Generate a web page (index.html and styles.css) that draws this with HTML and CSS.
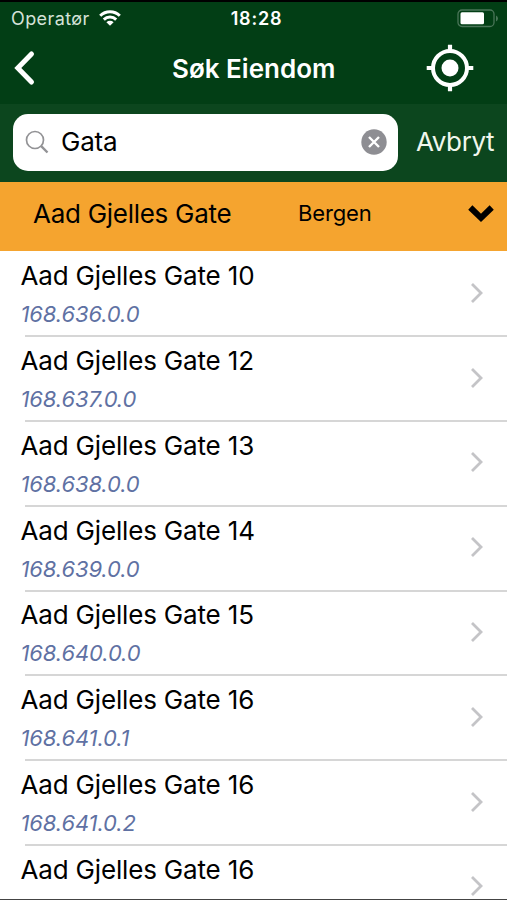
FILE: index.html
```html
<!DOCTYPE html>
<html lang="no">

<head>
  <meta charset="utf-8">
  <title>Søk Eiendom</title>
  <link rel="stylesheet" href="styles.css">
</head>

<body>
  <div id="app">
    <header>
      <div class="status">
        <div class="carrier">
          <span class="operator">Operatør</span>
          <svg width="22" height="16" viewBox="0 0 22 16" fill="none" stroke="#fff" stroke-width="3">
            <path d="M1.2 5.8a14 14 0 0 1 19.6 0" />
            <path d="M4.8 9.6a8.9 8.9 0 0 1 12.4 0" />
            <path d="M11 15.8L7.4 12.3a5.2 5.2 0 0 1 7.2 0z" fill="#fff" stroke="none" />
          </svg>
        </div>
        <span class="clock">18:28</span>
        <svg class="battery" width="42" height="19" viewBox="0 0 42 19">
          <rect x="1" y="1" width="36" height="16.5" rx="4" fill="none" stroke="#4a7558" stroke-width="1.3" />
          <rect x="3.5" y="3.3" width="23.5" height="12" rx="1.5" fill="#fff" />
          <path d="M39 6.5q2 1 2 3t-2 3z" fill="#4a7558" />
        </svg>
      </div>
      <div class="navbar">
        <svg class="back" width="22" height="36" viewBox="0 0 22 36" fill="none" stroke="#fff" stroke-width="5" stroke-linecap="round">
          <path d="M17.5 4L3.8 18L17.5 32" />
        </svg>
        <h1>Søk Eiendom</h1>
        <svg class="locate" width="48" height="48" viewBox="0 0 48 48">
          <circle cx="24" cy="24" r="17" fill="none" stroke="#fff" stroke-width="4" />
          <circle cx="24" cy="24" r="8.5" fill="#fff" />
          <path d="M24 .7v6M24 41.3v6M.7 24h6M41.3 24h6" stroke="#fff" stroke-width="4.2" />
        </svg>
      </div>
    </header>

    <div class="search">
      <div class="field">
        <svg width="24" height="24" viewBox="0 0 24 24" fill="none" stroke="#929295">
          <circle cx="10" cy="10" r="8.5" stroke-width="1.7" />
          <path d="M16.2 16.2L22.5 22.5" stroke-width="2.4" />
        </svg>
        <span class="query">Gata</span>
        <svg width="26" height="26" viewBox="0 0 26 26">
          <circle cx="13" cy="13" r="12.7" fill="#8e8e93" />
          <path d="M8 8l10 10M18 8L8 18" stroke="#fff" stroke-width="2.4" />
        </svg>
      </div>
      <span class="cancel">Avbryt</span>
    </div>

    <div class="section">
      <span class="street">Aad Gjelles Gate</span>
      <span class="city">Bergen</span>
      <svg width="26" height="18" viewBox="0 0 26 18" fill="none" stroke="#000" stroke-width="6">
        <path d="M2.3 3.5L13 13.8L23.7 3.5" />
      </svg>
    </div>

    <ul class="list"></ul>
  </div>

  <script>
    var results = [
      ['Aad Gjelles Gate 10', '168.636.0.0'],
      ['Aad Gjelles Gate 12', '168.637.0.0'],
      ['Aad Gjelles Gate 13', '168.638.0.0'],
      ['Aad Gjelles Gate 14', '168.639.0.0'],
      ['Aad Gjelles Gate 15', '168.640.0.0'],
      ['Aad Gjelles Gate 16', '168.641.0.1'],
      ['Aad Gjelles Gate 16', '168.641.0.2'],
      ['Aad Gjelles Gate 16', '']
    ]

    var list = document.querySelector('.list')
    results.forEach(function (item) {
      var row = document.createElement('li')
      row.innerHTML =
        '<div class="text"><div class="address">' + item[0] + '</div>' +
        '<div class="number">' + item[1] + '</div></div>' +
        '<svg width="14" height="22" viewBox="0 0 14 22" fill="none" stroke="#c4c4c7" stroke-width="2.8">' +
        '<path d="M2 2l9 9l-9 9" /></svg>'
      list.appendChild(row)
    })
  </script>
</body>

</html>
```
FILE: styles.css
```css
html,
body {
  margin: 0;
  padding: 0;
  height: 100%;
  overflow: hidden;
  background: #fff;
}

body {
  font-family: Inter, 'Liberation Sans', sans-serif;
  color: #000;
}

svg {
  display: block;
  flex: none;
}

#app {
  box-sizing: border-box;
  width: 507px;
  height: 900px;
  border-top: 2px solid #000;
  border-bottom: 1px solid #444;
  overflow: hidden;
}

header {
  background: #023e15;
  color: #fff;
  height: 102px;
}

.status {
  display: grid;
  grid-template-columns: 1fr auto 1fr;
  align-items: center;
  height: 32px;
  padding: 0 8px 0 11px;
}

.carrier {
  display: flex;
  align-items: center;
  gap: 9px;
}

.operator {
  font-size: 18px;
  letter-spacing: 0.4px;
  color: #d5e2d8;
}

.clock {
  font-size: 18px;
  font-weight: 600;
  letter-spacing: 0.8px;
  padding-left: 3px;
}

.battery {
  justify-self: end;
}

.navbar {
  display: grid;
  grid-template-columns: 140px 1fr 140px;
  align-items: center;
  height: 68px;
  padding: 0 33px 0 14px;
}

.navbar h1 {
  margin: 0;
  padding-left: 18px;
  font-size: 26px;
  font-weight: 600;
  white-space: nowrap;
}

.locate {
  justify-self: end;
  margin-right: 1px;
}

.search {
  display: flex;
  align-items: center;
  box-sizing: border-box;
  height: 78px;
  padding: 0 13px 2px;
  background: #0c461e;
}

.field {
  display: flex;
  flex: none;
  align-items: center;
  box-sizing: border-box;
  width: 385px;
  height: 57px;
  padding: 0 11px 0 12px;
  border-radius: 15px;
  background: #fff;
}

.query {
  flex: 1;
  padding: 0 0 2px 12px;
  font-size: 26px;
  letter-spacing: -0.2px;
}

.cancel {
  margin-left: 18px;
  padding-bottom: 2px;
  font-size: 26px;
  letter-spacing: -0.4px;
  color: #f1f7ed;
}

.section {
  display: flex;
  align-items: center;
  box-sizing: border-box;
  height: 69px;
  padding: 0 13px 7px 33px;
  background: #f5a42f;
}

.street {
  width: 265px;
  font-size: 26px;
  letter-spacing: -0.28px;
}

.city {
  flex: 1;
  padding-bottom: 1px;
  font-size: 22px;
  letter-spacing: -0.15px;
}

.list {
  margin: -0.5px 0 0;
  padding: 0;
  list-style: none;
}

.list li {
  display: flex;
  align-items: center;
  box-sizing: border-box;
  height: 84.8px;
  padding: 0 23px 0 20.5px;
}

.list li + li {
  background: linear-gradient(#d6d6d6, #d6d6d6) 25px 0 / 100% 2px no-repeat;
}

.text {
  flex: 1;
  align-self: flex-start;
}

.address {
  padding-top: 7.8px;
  font-size: 26px;
  line-height: 36px;
  letter-spacing: -0.17px;
}

.number {
  padding-top: 4px;
  font-size: 22px;
  line-height: 32px;
  font-style: italic;
  letter-spacing: -0.12px;
  color: #5f71a3;
}
```
